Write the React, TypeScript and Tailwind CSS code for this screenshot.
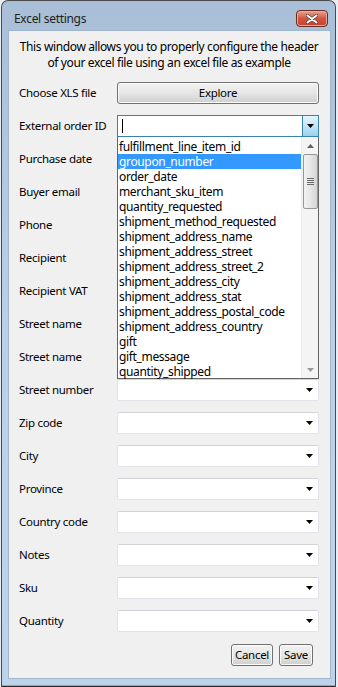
import React from "react";

const labels = [
  "External order ID",
  "Purchase date",
  "Buyer email",
  "Phone",
  "Recipient",
  "Recipient VAT",
  "Street name",
  "Street name",
  "Street number",
  "Zip code",
  "City",
  "Province",
  "Country code",
  "Notes",
  "Sku",
  "Quantity",
];

const options = [
  "fulfillment_line_item_id",
  "groupon_number",
  "order_date",
  "merchant_sku_item",
  "quantity_requested",
  "shipment_method_requested",
  "shipment_address_name",
  "shipment_address_street",
  "shipment_address_street_2",
  "shipment_address_city",
  "shipment_address_stat",
  "shipment_address_postal_code",
  "shipment_address_country",
  "gift",
  "gift_message",
  "quantity_shipped",
];

function Tri({ color = "#000" }: { color?: string }) {
  return (
    <svg width="7" height="4" viewBox="0 0 7 4" className="block">
      <path d="M0 0H7L3.5 4Z" fill={color} />
    </svg>
  );
}

function Combo() {
  return (
    <div className="relative flex-1 h-[22px] bg-white border border-[#e2e3ea] border-t-[#d2d3d8] rounded-[2px] flex items-center justify-end pr-[5px]">
      <Tri />
    </div>
  );
}

function ActiveCombo() {
  return (
    <div className="relative flex-1 h-[22px]">
      <div className="absolute inset-0 bg-white border border-[#3c7fb1] flex items-center">
        <div className="ml-[4px] w-px h-[14px] bg-black" />
        <div className="ml-auto h-full w-[16px] border-l border-[#3c7fb1] bg-gradient-to-b from-[#e5f4fc] via-[#c4e5f6] to-[#98d1ef] flex items-center justify-center">
          <Tri />
        </div>
      </div>
      <div className="absolute left-0 right-0 top-[22px] h-[242px] bg-white border border-[#646464] border-t-0 z-10 flex text-[12px] tracking-[-0.35px]">
        <div className="flex-1 pt-[2px] flex flex-col">
          {options.map((o, i) => (
            <div
              key={o}
              className={
                "h-[15px] leading-[15px] pl-[1px] whitespace-nowrap " +
                (i === 1 ? "bg-[#3399ff] text-white" : "text-black")
              }
            >
              {o}
            </div>
          ))}
        </div>
        <div className="w-[17px] bg-[#f4f4f4] border-l border-[#ececec] flex flex-col items-center">
          <div className="h-[17px] flex items-center justify-center">
            <svg width="7" height="4" viewBox="0 0 7 4" className="block">
              <path d="M0 4H7L3.5 0Z" fill="#606060" />
            </svg>
          </div>
          <div className="w-[15px] h-[55px] rounded-[2px] border border-[#979797] bg-gradient-to-r from-[#f2f2f2] via-[#e6e6e6] to-[#d4d4d4] flex flex-col items-center justify-center gap-[1px]">
            <div className="w-[7px] h-px bg-[#6b6b6b]" />
            <div className="w-[7px] h-px bg-[#6b6b6b]" />
            <div className="w-[7px] h-px bg-[#6b6b6b]" />
            <div className="w-[7px] h-px bg-[#6b6b6b]" />
          </div>
          <div className="flex-1" />
          <div className="h-[17px] flex items-center justify-center">
            <svg width="7" height="4" viewBox="0 0 7 4" className="block">
              <path d="M0 0H7L3.5 4Z" fill="#9a9a9a" />
            </svg>
          </div>
        </div>
      </div>
    </div>
  );
}

function Btn({ children, w }: { children: React.ReactNode; w: string }) {
  return (
    <div
      className={
        "h-[22px] rounded-[3px] border border-[#707070] bg-gradient-to-b from-[#f2f2f2] via-[#e6e6e6] to-[#cfcfcf] flex items-center justify-center shadow-[inset_0_0_0_1px_#fcfcfc] " +
        w
      }
    >
      {children}
    </div>
  );
}

export default function App() {
  return (
    <div className="w-[338px] h-[687px] bg-[#e9eef3] overflow-hidden font-['Noto_Sans',sans-serif] text-[12px] text-black">
      <div className="ml-px w-[335px] h-[687px] rounded-t-[7px] border-x border-t border-[#4a4a4a] bg-gradient-to-b from-[#a8bfd7] via-[#bcd1e8] to-[#bdd3ea] flex flex-col">
        <div className="h-[29px] flex items-start pl-[12px] pr-[7px]">
          <div className="mt-[10px] leading-[16px] text-[#1e1e1e] tracking-[-0.3px]">Excel settings</div>
          <div className="ml-auto mt-[9px] w-[32px] h-[17px] rounded-[4px] border border-[#6b2a22] bg-gradient-to-b from-[#e8a393] via-[#d2563f] to-[#c1412c] flex items-center justify-center shadow-[inset_0_0_0_1px_#eba99c]">
            <svg width="12" height="10" viewBox="0 0 12 10" className="block">
              <path d="M1.5 1.5L10.5 8.5M10.5 1.5L1.5 8.5" stroke="#5a3a36" strokeWidth="3.4" strokeLinecap="round" />
              <path d="M1.5 1.5L10.5 8.5M10.5 1.5L1.5 8.5" stroke="#ffffff" strokeWidth="2" strokeLinecap="round" />
            </svg>
          </div>
        </div>
        <div className="ml-[6px] mr-[4px] h-[649px] bg-[#f0f0f0] border border-[#9fb6cd] pl-[10px] pr-[11px] pt-[8px] flex flex-col text-[11.5px] tracking-[-0.3px]">
          <div className="text-center leading-[16px] text-[12px] tracking-[-0.38px] whitespace-nowrap">
            This window allows you to properly configure the header
            <br />
            of your excel file using an excel file as example
          </div>
          <div className="mt-[11px] flex items-center h-[22px]">
            <div className="w-[98px] whitespace-nowrap">Choose XLS file</div>
            <Btn w="flex-1">Explore</Btn>
          </div>
          <div className="mt-[11px] flex flex-col gap-[11px]">
            {labels.map((l, i) => (
              <div key={i} className="flex items-center h-[22px]">
                <div className="w-[98px] whitespace-nowrap">{l}</div>
                {i === 0 ? <ActiveCombo /> : <Combo />}
              </div>
            ))}
          </div>
          <div className="mt-[12px] flex justify-end gap-[6px] pr-[6px]">
            <Btn w="w-[42px]">Cancel</Btn>
            <Btn w="w-[34px]">Save</Btn>
          </div>
        </div>
        <div className="flex-1" />
        <div className="h-px bg-[#3cc8e8]" />
        <div className="h-px bg-[#2a2a2a]" />
      </div>
    </div>
  );
}
